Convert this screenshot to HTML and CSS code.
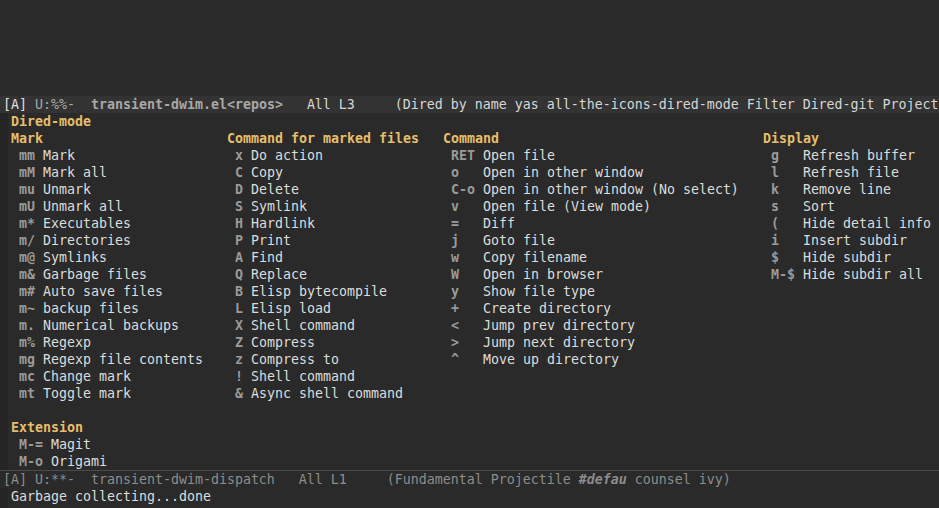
FILE: index.html
```html
<!DOCTYPE html>
<html>
<head>
<meta charset="utf-8">
<link rel="stylesheet" href="styles.css">
</head>
<body>
<div class="frame">
  <div class="window top-window"></div>
  <div class="modeline active"><span class="ml-a">[A]</span> <span class="ml-dim">U:%%-</span>  <span class="ml-buf">transient-dwim.el&lt;repos&gt;</span>   All L3     (Dired by name yas all-the-icons-dired-mode Filter Dired-git Projecti</div>
  <div class="window transient">
    <div class="line heading">Dired-mode</div>
    <div class="cols">
      <div class="col col-mark">
        <div class="line heading">Mark</div>
        <div class="line"> <span class="key">mm</span> Mark</div>
        <div class="line"> <span class="key">mM</span> Mark all</div>
        <div class="line"> <span class="key">mu</span> Unmark</div>
        <div class="line"> <span class="key">mU</span> Unmark all</div>
        <div class="line"> <span class="key">m*</span> Executables</div>
        <div class="line"> <span class="key">m/</span> Directories</div>
        <div class="line"> <span class="key">m@</span> Symlinks</div>
        <div class="line"> <span class="key">m&amp;</span> Garbage files</div>
        <div class="line"> <span class="key">m#</span> Auto save files</div>
        <div class="line"> <span class="key">m~</span> backup files</div>
        <div class="line"> <span class="key">m.</span> Numerical backups</div>
        <div class="line"> <span class="key">m%</span> Regexp</div>
        <div class="line"> <span class="key">mg</span> Regexp file contents</div>
        <div class="line"> <span class="key">mc</span> Change mark</div>
        <div class="line"> <span class="key">mt</span> Toggle mark</div>
      </div>
      <div class="col col-marked">
        <div class="line heading">Command for marked files</div>
        <div class="line"> <span class="key">x</span> Do action</div>
        <div class="line"> <span class="key">C</span> Copy</div>
        <div class="line"> <span class="key">D</span> Delete</div>
        <div class="line"> <span class="key">S</span> Symlink</div>
        <div class="line"> <span class="key">H</span> Hardlink</div>
        <div class="line"> <span class="key">P</span> Print</div>
        <div class="line"> <span class="key">A</span> Find</div>
        <div class="line"> <span class="key">Q</span> Replace</div>
        <div class="line"> <span class="key">B</span> Elisp bytecompile</div>
        <div class="line"> <span class="key">L</span> Elisp load</div>
        <div class="line"> <span class="key">X</span> Shell command</div>
        <div class="line"> <span class="key">Z</span> Compress</div>
        <div class="line"> <span class="key">z</span> Compress to</div>
        <div class="line"> <span class="key">!</span> Shell command</div>
        <div class="line"> <span class="key">&amp;</span> Async shell command</div>
      </div>
      <div class="col col-command">
        <div class="line heading">Command</div>
        <div class="line"> <span class="key">RET</span> Open file</div>
        <div class="line"> <span class="key">o  </span> Open in other window</div>
        <div class="line"> <span class="key">C-o</span> Open in other window (No select)</div>
        <div class="line"> <span class="key">v  </span> Open file (View mode)</div>
        <div class="line"> <span class="key">=  </span> Diff</div>
        <div class="line"> <span class="key">j  </span> Goto file</div>
        <div class="line"> <span class="key">w  </span> Copy filename</div>
        <div class="line"> <span class="key">W  </span> Open in browser</div>
        <div class="line"> <span class="key">y  </span> Show file type</div>
        <div class="line"> <span class="key">+  </span> Create directory</div>
        <div class="line"> <span class="key">&lt;  </span> Jump prev directory</div>
        <div class="line"> <span class="key">&gt;  </span> Jump next directory</div>
        <div class="line"> <span class="key">^  </span> Move up directory</div>
      </div>
      <div class="col col-display">
        <div class="line heading">Display</div>
        <div class="line"> <span class="key">g  </span> Refresh buffer</div>
        <div class="line"> <span class="key">l  </span> Refresh file</div>
        <div class="line"> <span class="key">k  </span> Remove line</div>
        <div class="line"> <span class="key">s  </span> Sort</div>
        <div class="line"> <span class="key">(  </span> Hide detail info</div>
        <div class="line"> <span class="key">i  </span> Insert subdir</div>
        <div class="line"> <span class="key">$  </span> Hide subdir</div>
        <div class="line"> <span class="key">M-$</span> Hide subdir all</div>
      </div>
    </div>
    <div class="line"> </div>
    <div class="line heading">Extension</div>
    <div class="line"> <span class="key">M-=</span> Magit</div>
    <div class="line"> <span class="key">M-o</span> Origami</div>
  </div>
  <div class="modeline inactive">[A] U:**-  transient-dwim-dispatch   All L1     (Fundamental Projectile <span class="ml-em">#defau</span> counsel ivy)</div>
  <div class="window echo">
    <div class="line">Garbage collecting...done</div>
  </div>
</div>
</body>
</html>
```

FILE: styles.css
```css
html, body {
  margin: 0;
  padding: 0;
  background: #2a2a2a;
}

.frame {
  width: 939px;
  height: 508px;
  overflow: hidden;
  background: #2a2a2a;
  font-family: "DejaVu Sans Mono", "Liberation Mono", monospace;
  font-size: 13.29px;
  line-height: 17px;
  color: #dcdcdc;
}

.line {
  height: 17px;
  white-space: pre;
}

.window {
  border-left: 8px solid #252525;
  padding-left: 3px;
}

.top-window {
  height: 96px;
  border-left-color: #2a2a2a;
}

.modeline {
  height: 17px;
  white-space: pre;
  padding-left: 3px;
  overflow: hidden;
}

.modeline.active {
  background: #333333;
  color: #d6d6d6;
}

.ml-a {
  color: #e0e0e0;
}

.ml-dim {
  color: #a8a8a8;
}

.ml-buf {
  color: #a8a8a8;
  font-weight: bold;
}

.modeline.inactive {
  background: #2a2a2a;
  color: #8c8c8c;
  border-top: 1px solid #4a4a4a;
}

.ml-em {
  font-weight: bold;
  font-style: italic;
}

.transient {
  height: 357px;
}

.heading {
  color: #e5bf6a;
  font-weight: bold;
}

.key {
  color: #9a9a9a;
  font-weight: bold;
}

.cols {
  display: flex;
}

.col-mark,
.col-marked {
  width: 216px;
}

.col-command {
  width: 320px;
}

.echo {
  height: 21px;
  color: #dcdcdc;
}
```
